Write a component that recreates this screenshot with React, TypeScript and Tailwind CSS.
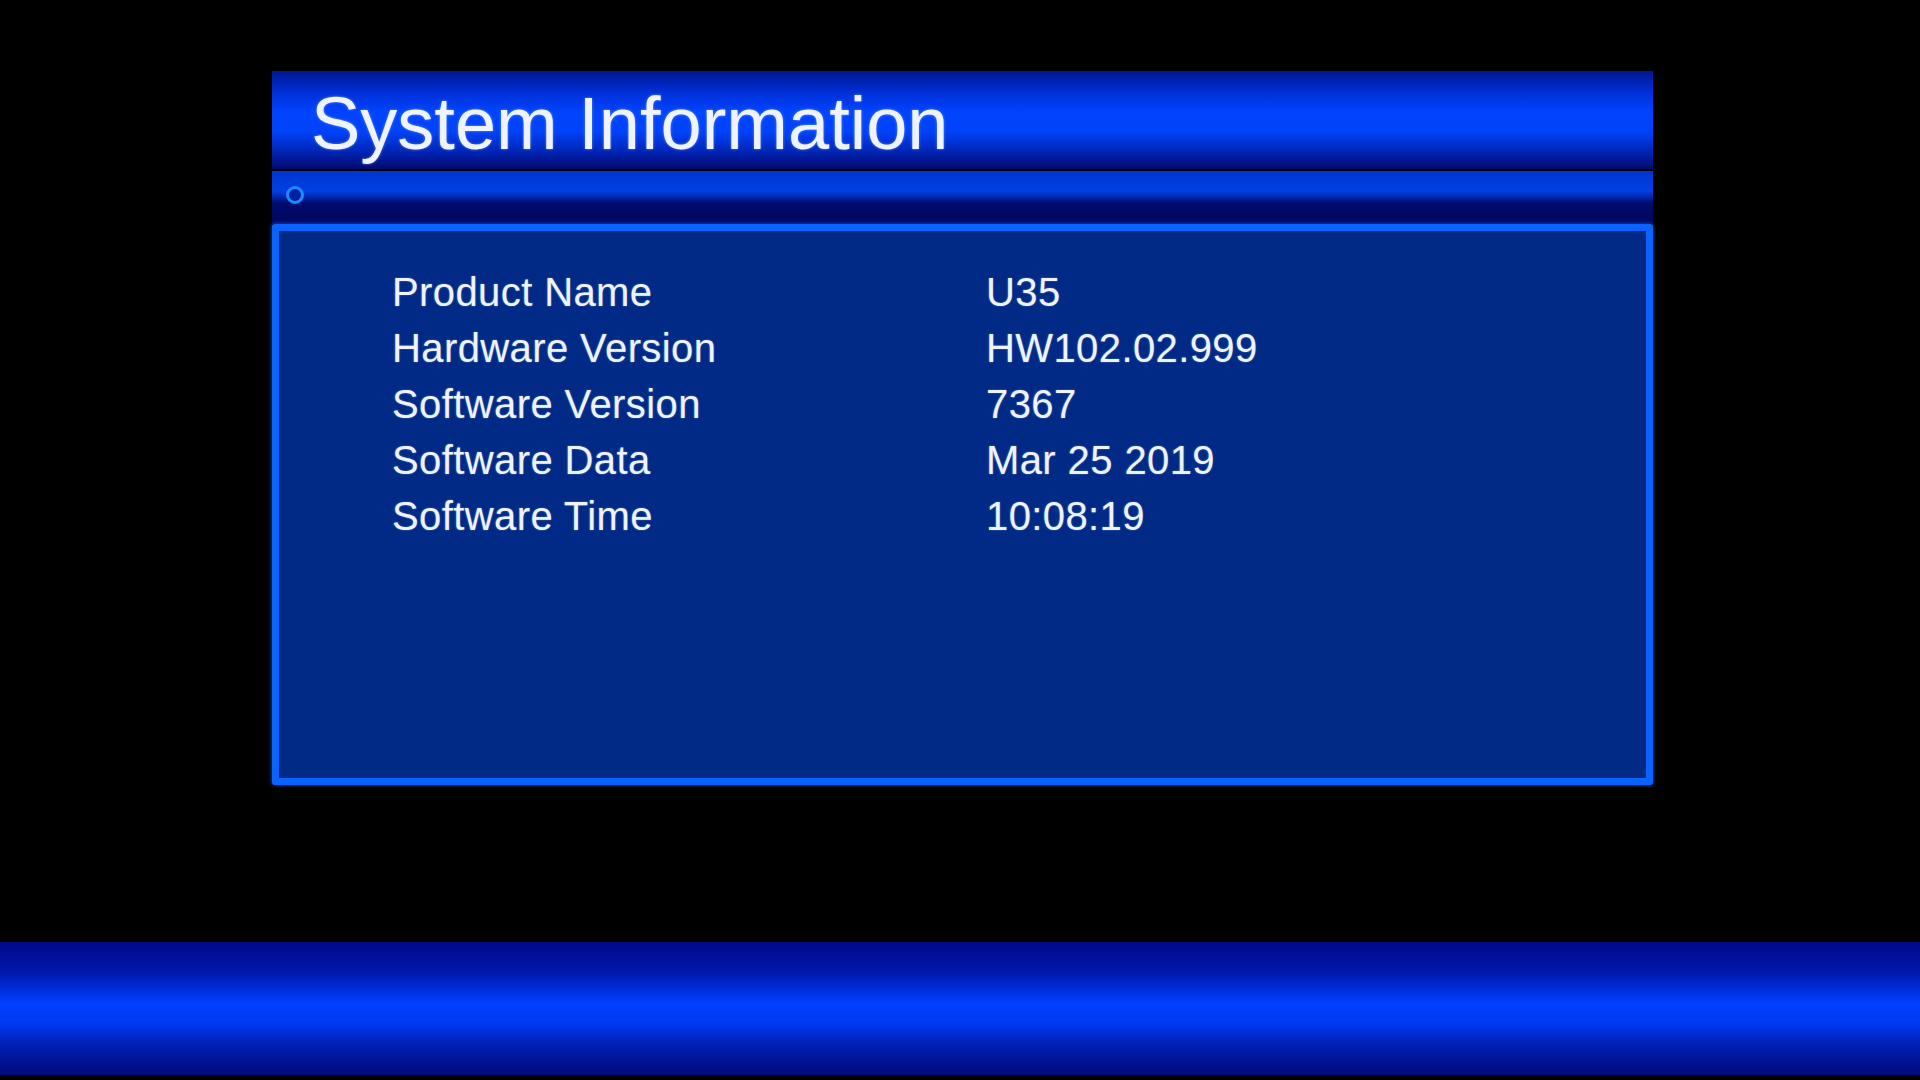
const rows: [string, string][] = [
  ['Product Name', 'U35'],
  ['Hardware Version', 'HW102.02.999'],
  ['Software Version', '7367'],
  ['Software Data', 'Mar 25 2019'],
  ['Software Time', '10:08:19'],
]

export default function App() {
  return (
    <div className="flex h-[1080px] w-full flex-col overflow-hidden bg-black font-['Liberation_Sans',Arial,sans-serif] text-[#eef3ff]">
      <div className="ml-[272px] mt-[71px] flex w-[1381px] flex-col">
        {/* title bar */}
        <div className="h-[98px] bg-[linear-gradient(to_bottom,#001690_0%,#0030d8_22%,#0044ff_42%,#0042f8_62%,#0022b0_84%,#000a6c_100%)] pl-[39px] pt-[16px]">
          <h1 className="text-[74px] leading-none [text-shadow:0_0_3px_rgba(160,200,255,0.6)]">
            System Information
          </h1>
        </div>

        {/* sub bar */}
        <div className="mt-[2px] flex h-[53px] items-center bg-[linear-gradient(to_bottom,#0036d0_0%,#0040e4_38%,#0024a8_50%,#000c70_60%,#00065c_100%)] pl-[14px]">
          <span className="-mt-[6px] block h-[18px] w-[18px] rounded-full border-[3px] border-[#1a8cff] bg-[#0020a0]" />
        </div>

        {/* info panel */}
        <div className="h-[561px] rounded-[3px] border-[7px] border-[#0a62ff] bg-[#002a85] pl-[113px] pt-[33px] shadow-[0_0_4px_rgba(30,120,255,0.7)]">
          <div className="grid grid-cols-[594px_1fr] text-[40px] leading-[56px] tracking-[0.4px] [text-shadow:0_0_2px_rgba(160,200,255,0.5)]">
            {rows.map(([label, value]) => (
              <div key={label} className="contents">
                <div>{label}</div>
                <div>{value}</div>
              </div>
            ))}
          </div>
        </div>
      </div>

      {/* bottom bar */}
      <div className="mb-[5px] mt-auto h-[133px] w-full bg-[linear-gradient(to_bottom,#000a88_0%,#0016ac_22%,#0040ff_46%,#003af4_60%,#001cac_80%,#000a7c_100%)]" />
    </div>
  )
}
